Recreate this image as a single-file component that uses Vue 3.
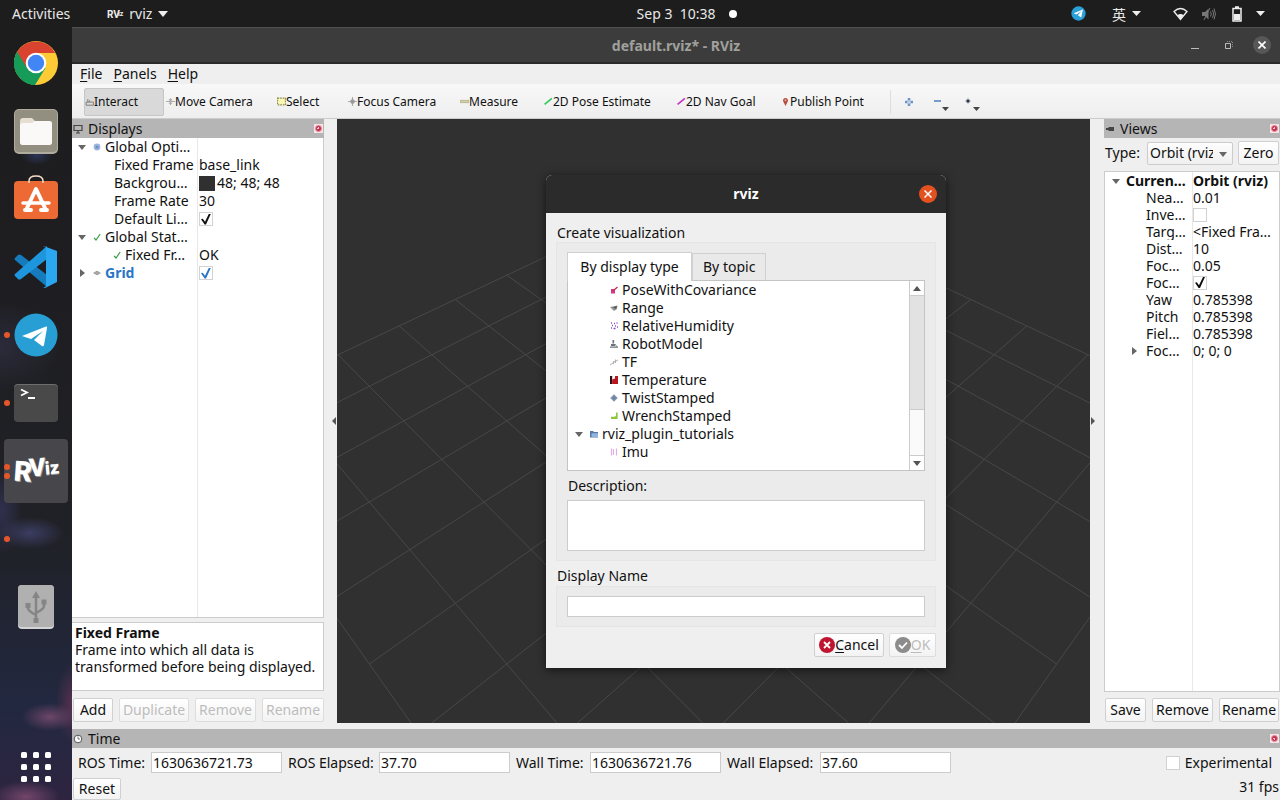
<script setup>
import { ref } from 'vue'

const icons = {
  interact: '<path d="M1 4.5h6.5v2.8H1zM2.5 4.5V1.8M4 4.5V3" fill="none" stroke="#777" stroke-width=".8"/>',
  move: '<path d="M0 4h8M4 1v6M2.5 2.5h3M2.5 5.5h3" fill="none" stroke="#aaa"/>',
  select: '<rect x=".5" y="1" width="7" height="6" fill="#fbf8b4" stroke="#8a8a50" stroke-dasharray="1.5 .8"/>',
  focus: '<path d="M0 4h8M4 0v8" stroke="#aaa"/><circle cx="4" cy="4" r="2" fill="#999"/>',
  measure: '<path d="M0 3h8v2H0z" fill="#d5d0a4" stroke="#a8a584" stroke-width=".6"/>',
  pose: '<path d="M.5 6.5 7 1.2" stroke="#33c85c" stroke-width="1.5"/>',
  nav: '<path d="M.5 6.5 7 1.2" stroke="#c338c0" stroke-width="1.5"/>',
  pin: '<path d="M4 8 2 4a2.2 2.2 0 1 1 4 0z" fill="#b5503f"/><circle cx="4" cy="2.8" r=".8" fill="#e9b8ae"/>',
  options: '<circle cx="4" cy="4" r="3.4" fill="#9db5dc"/><circle cx="4" cy="4" r="1.6" fill="#6f90c8"/>',
  tick: '<path d="M1 4.8 3 7 7.2 1" fill="none" stroke="#3c9a46" stroke-width="1.2"/>',
  grid: '<path d="M0 4 4 1.8 8 4 4 6.2z" fill="#999"/><path d="M2 3 6 5M6 3 2 5" stroke="#bbb" stroke-width=".5"/>',
  covariance: '<path d="M1 3h4v4.5H1z" fill="#d33a86"/><path d="M3 5 7.5 1" stroke="#c22f56" stroke-width="1.4"/>',
  range: '<path d="M0 3 7.5 1.5 7 5 4 7z" fill="#8f9492"/><path d="M3 3.2 7 2 6 5z" fill="#555"/>',
  humidity: '<path d="M1 1h1M4 1.5h1M6.5 1h1M2 3.5h1M5 4h1M7 5h1M1 6h1M3.5 6.5h2" stroke="#8450c9" stroke-width="1.3"/>',
  robot: '<path d="M2.5 0h1.6v3.5H2.5zM1 4h4v2H1zM0 6.5h8v1.3H0z" fill="#6c737b"/><path d="M5 4l2 3" stroke="#888"/>',
  tf: '<path d="M0 7l3-2M3.5 6V3M4 4l4-2M5.5 5V1.5" fill="none" stroke="#a7aaa3" stroke-width=".9"/>',
  temperature: '<path d="M0 0h2.2v8H0z" fill="#2b1014"/><path d="M2.2 3.5 5 2.500V0h3v8H2.2z" fill="#b91620"/>',
  twist: '<path d="M4 .2 7.8 4 4 7.8.2 4z" fill="#8799b2"/><path d="M4 1.5v5M2 4h4" stroke="#61769a" stroke-width=".8"/>',
  wrench: '<path d="M6 .5h1.6v6.500H1V4.8h3.4L6 4z" fill="#8cc63f"/>',
  folder: '<path d="M0 1h3l1 1h4v5.5H0z" fill="#54789f"/><path d="M1.5 3.2H8v4H1.5z" fill="#8eb5de"/>',
  imu: '<path d="M1.500 .5v7M3.500 1v6M6.5 .5v7" stroke="#ddb2e2" stroke-width="1.2"/>',
}

const launchers = [
  { id: 'chrome', name: 'Google Chrome', dots: 0 },
  { id: 'files', name: 'Files', dots: 0 },
  { id: 'store', name: 'Software', dots: 0 },
  { id: 'code', name: 'Visual Studio Code', dots: 0 },
  { id: 'telegram', name: 'Telegram', dots: 1 },
  { id: 'terminal', name: 'Terminal', dots: 1 },
  { id: 'rviz', name: 'RViz', dots: 2 },
  { id: 'blank', name: 'Application', dots: 1 },
  { id: 'usb', name: 'USB Drive', dots: 0 },
]

const tools = [
  { label: 'Interact', icon: 'interact', on: true },
  { label: 'Move Camera', icon: 'move' },
  { label: 'Select', icon: 'select' },
  { label: 'Focus Camera', icon: 'focus' },
  { label: 'Measure', icon: 'measure' },
  { label: '2D Pose Estimate', icon: 'pose' },
  { label: '2D Nav Goal', icon: 'nav' },
  { label: 'Publish Point', icon: 'pin' },
]

const displays = [
  { name: 'Global Opti…', level: 1, arrow: 'down', icon: 'options' },
  { name: 'Fixed Frame', level: 2, value: 'base_link' },
  { name: 'Backgrou…', level: 2, value: '48; 48; 48', swatch: true },
  { name: 'Frame Rate', level: 2, value: '30' },
  { name: 'Default Li…', level: 2, check: true },
  { name: 'Global Stat…', level: 1, arrow: 'down', icon: 'tick' },
  { name: 'Fixed Fr…', level: 2, icon: 'tick', value: 'OK' },
  { name: 'Grid', level: 1, arrow: 'right', icon: 'grid', check: true, blue: true },
]

const view = [
  { name: 'Curren…', level: 1, arrow: 'down', value: 'Orbit (rviz)', bold: true },
  { name: 'Nea…', level: 2, value: '0.01' },
  { name: 'Inve…', level: 2, check: false },
  { name: 'Targ…', level: 2, value: '<Fixed Fra…' },
  { name: 'Dist…', level: 2, value: '10' },
  { name: 'Foc…', level: 2, value: '0.05' },
  { name: 'Foc…', level: 2, check: true },
  { name: 'Yaw', level: 2, value: '0.785398' },
  { name: 'Pitch', level: 2, value: '0.785398' },
  { name: 'Fiel…', level: 2, value: '0.785398' },
  { name: 'Foc…', level: 2, arrow: 'right', value: '0; 0; 0' },
]

const types = [
  { name: 'PoseWithCovariance', icon: 'covariance' },
  { name: 'Range', icon: 'range' },
  { name: 'RelativeHumidity', icon: 'humidity' },
  { name: 'RobotModel', icon: 'robot' },
  { name: 'TF', icon: 'tf' },
  { name: 'Temperature', icon: 'temperature' },
  { name: 'TwistStamped', icon: 'twist' },
  { name: 'WrenchStamped', icon: 'wrench' },
  { name: 'rviz_plugin_tutorials', icon: 'folder', parent: true },
  { name: 'Imu', icon: 'imu' },
]

const clocks = ref([
  { id: 'ros-time', label: 'ROS Time:', value: '1630636721.73' },
  { id: 'ros-elapsed', label: 'ROS Elapsed:', value: '37.70' },
  { id: 'wall-time', label: 'Wall Time:', value: '1630636721.76' },
  { id: 'wall-elapsed', label: 'Wall Elapsed:', value: '37.60' },
])

// Orbit camera: distance 10, yaw and pitch 45 degrees, vertical field of view 45 degrees.
function project(a, b) {
  const right = (a - b) / Math.SQRT2
  const near = (a + b) / 2
  const scale = 729 / (10 - near)
  return [right * scale, near * scale]
}
const gridLines = []
for (let i = -5; i <= 5; i++) {
  gridLines.push([...project(i, -5), ...project(i, 5)])
  gridLines.push([...project(-5, i), ...project(5, i)])
}
</script>

<template>
  <div class="desktop">
    <header class="topbar">
      <div class="top-left">
        <button class="plain">Activities</button>
        <button class="plain app-menu">
          <svg class="mini-logo" width="16" height="14" viewBox="0 0 16 14"><text x="0" y="11">RV</text><text class="mini-iz" x="11" y="9">iz</text></svg>
          <span>rviz</span>
          <svg width="10" height="6" viewBox="0 0 10 6"><path d="M0 0h10L5 6z" fill="#eee" /></svg>
        </button>
      </div>
      <div class="clock"><span>Sep 3&nbsp; 10:38</span><i class="notice"></i></div>
      <div class="tray">
        <svg width="15" height="15" viewBox="0 0 44 44"><circle cx="22" cy="22" r="21" fill="#2a9fd8" /><path d="M8 21 35 10 30 34 20 27 31 15 16 25z" fill="#fff" /></svg>
        <span class="ime">英</span>
        <svg class="ime-arrow" width="9" height="6" viewBox="0 0 9 6"><path d="M0 0h9L4.500 5z" fill="#eee" /></svg>
        <svg class="wifi" width="15" height="14" viewBox="0 0 15 14"><path d="M1 4.500Q7.500-1.500 14 4.500L7.500 12.500z" fill="none" stroke="#eee" stroke-width="1.300" /><path d="M4.500 8q3-2 6 0l-3 4.500z" fill="#eee" /></svg>
        <svg class="volume" width="15" height="14" viewBox="0 0 15 14"><path d="M1 5h3l3.500-3.500v11L4 9H1z" fill="#777" /><path d="M9.500 4.500q1.500 2.500 0 5M11.500 3q2.500 4 0 8M13 1.500q3 5.500 0 11M3 13 9 1" fill="none" stroke="#777" /></svg>
        <svg class="battery" width="10" height="16" viewBox="0 0 10 16"><path d="M1 2.500h8v12.500H1zM3 1h4" fill="none" stroke="#eee" stroke-width="1.500" /><path d="M2 8h6v6H2z" fill="#eee" /></svg>
        <svg width="9" height="6" viewBox="0 0 9 6"><path d="M0 0h9L4.500 5z" fill="#eee" /></svg>
      </div>
    </header>

    <nav class="dock" aria-label="Launcher">
      <button v-for="l in launchers" :key="l.id" class="launcher" :class="{ current: l.id === 'rviz' }" :aria-label="l.name">
        <span v-if="l.dots" class="dots"><i v-for="n in l.dots" :key="n"></i></span>
        <svg v-if="l.id === 'chrome'" width="44" height="44" viewBox="0 0 44 44">
          <circle cx="22" cy="22" r="22" fill="#fdcb36" />
          <path d="M22 22 3 11A22 22 0 0 0 21 44L31.500 27z" fill="#169b58" />
          <path d="M3 11A22 22 0 0 1 41.100 12H22l-9 15z" fill="#d9432f" />
          <path d="M3 11 12.500 27 22 32l-1 12A22 22 0 0 1 3 11z" fill="#169b58" />
          <circle cx="22" cy="22" r="10.300" fill="#fff" /><circle cx="22" cy="22" r="8.200" fill="#4285f4" />
        </svg>
        <svg v-else-if="l.id === 'files'" width="44" height="45" viewBox="0 0 44 45">
          <rect width="44" height="45" rx="5" fill="#b0ac9e" /><rect x="1" y="1" width="42" height="42" rx="4" fill="#938f80" />
          <path d="M6 12q0-3 3-3h9l3 3h14q3 0 3 3v18q0 3-3 3H9q-3 0-3-3z" fill="#e6ddd3" /><path d="M6 17q0-3 3-3h9l3-2h14q3 0 3 3v18q0 3-3 3H9q-3 0-3-3z" fill="#fbf9f8" />
        </svg>
        <svg v-else-if="l.id === 'store'" class="store" width="44" height="44" viewBox="0 0 44 44">
          <rect y="6" width="44" height="38" rx="4" fill="#ee6a34" />
          <path d="M15 8V6q0-5 7-5t7 5v2" fill="none" stroke="#f3dfc9" stroke-width="1.500" />
          <path d="M13 33 22 14l9 19" fill="none" stroke="#fff" stroke-width="4" stroke-linecap="round" stroke-linejoin="round" />
          <path d="M9 28h26" stroke="#fff" stroke-width="3.500" stroke-linecap="round" />
          <path d="M11 35h6M27 35h6" stroke="#fff" stroke-width="4" stroke-linecap="round" />
        </svg>
        <svg v-else-if="l.id === 'code'" width="44" height="44" viewBox="0 0 44 44">
          <path d="M1 15q-1-1 0-2l3-3q1-1 3 0L33 30v12L1 15z" fill="#167bbd" />
          <path d="M1 29q-1 1 0 2l3 3q1 1 3 0L33 14V1L1 29z" fill="#1e96dd" />
          <path d="M31 1.500 43 6v31l-12 6q-1 0-2-1 3 1 3-2V4q0-4-3-2z" fill="#2ba7f2" />
        </svg>
        <svg v-else-if="l.id === 'telegram'" width="44" height="44" viewBox="0 0 44 44">
          <circle cx="22" cy="22" r="21.500" fill="#279fd5" /><path d="M8 23 32 13.500q1.500-.500 1 1.500L30 32q-.500 2-2 1l-8-6 9-9-12 8z" fill="#fff" />
        </svg>
        <svg v-else-if="l.id === 'terminal'" width="44" height="38" viewBox="0 0 44 38">
          <rect width="44" height="37" rx="4" fill="#6e6e6e" /><rect y="1" width="44" height="37" rx="4" fill="#494949" />
          <path d="m7 5.500 6 3-6 3M14 14h7" fill="none" stroke="#fff" stroke-width="1.800" />
        </svg>
        <svg v-else-if="l.id === 'rviz'" class="logo" width="56" height="40" viewBox="0 0 56 40">
          <g class="logo-shadow"><text x="7" y="31" class="big" transform="rotate(4 14 20)">R</text><text x="22" y="26" class="mid" transform="rotate(-4 30 18)">V</text><text x="37" y="24" class="low" transform="rotate(-5 42 18)">iz</text></g>
          <g><text x="6" y="30" class="big" transform="rotate(4 14 20)">R</text><text x="21" y="25" class="mid" transform="rotate(-4 30 18)">V</text><text x="37" y="23" class="low" transform="rotate(-5 42 18)">iz</text></g>
        </svg>
        <svg v-else-if="l.id === 'usb'" width="36" height="44" viewBox="0 0 36 44">
          <rect width="36" height="44" rx="4" fill="#d4d4d4" /><rect width="36" height="42" rx="4" fill="#b0b0b0" />
          <path d="M18 10v27M10 19v4q0 3 8 7M26 17v4q0 3-8 7" fill="none" stroke="#858585" stroke-width="2.500" />
          <path d="m18 6 4 7h-8zM7.500 18h5v5h-5zM23.500 14.500h5v5h-5zM15.500 33h5v5h-5z" fill="#858585" />
        </svg>
      </button>
      <button class="launcher apps" aria-label="Show Applications">
        <svg width="32" height="32" viewBox="0 0 32 32" fill="#fff">
          <template v-for="y in 3" :key="y"><rect v-for="x in 3" :key="x" :x="(x - 1) * 12 + 1" :y="(y - 1) * 12 + 1" width="6" height="6" rx="1.500" /></template>
        </svg>
      </button>
    </nav>

    <main class="window">
      <div class="titlebar">
        <h1>default.rviz* - RViz</h1>
        <div class="win-buttons">
          <button class="plain" aria-label="Minimize"><svg width="10" height="10" viewBox="0 0 10 10"><path d="M1 8.500h8" stroke="#bbb" /></svg></button>
          <button class="plain" aria-label="Restore"><svg width="10" height="10" viewBox="0 0 10 10"><path d="M1.500 3.500h5v5h-5z" fill="none" stroke="#bbb" /><path d="M3 1.500h5.500V7" fill="none" stroke="#888" stroke-dasharray="1 1" /></svg></button>
          <button class="plain round" aria-label="Close"><svg width="8" height="8" viewBox="0 0 8 8"><path d="m.5.5 7 7M7.500.5l-7 7" stroke="#fff" stroke-width="1.600" /></svg></button>
        </div>
      </div>
      <div class="menubar">
        <button class="plain"><u>F</u>ile</button><button class="plain"><u>P</u>anels</button><button class="plain"><u>H</u>elp</button>
      </div>
      <div class="toolbar">
        <button v-for="t in tools" :key="t.label" class="plain tool" :class="{ on: t.on }">
          <svg width="9" height="9" viewBox="0 0 8 8" v-html="icons[t.icon]"></svg>{{ t.label }}
        </button>
        <div class="extras">
          <button class="plain" aria-label="Add tool"><svg width="8" height="8" viewBox="0 0 8 8"><path d="M4 0v8M0 4h8" stroke="#6e93c7" stroke-width="2.500" /><path d="M4 2v4M2 4h4" stroke="#dbe7f7" /></svg></button>
          <button class="plain" aria-label="Remove tool"><svg width="18" height="16" viewBox="0 0 18 16"><path d="M1 5h7" stroke="#5b85c3" stroke-width="1.600" /><path d="M9 11h7l-3.500 4z" fill="#444" /></svg></button>
          <button class="plain" aria-label="Rename tool"><svg width="18" height="16" viewBox="0 0 18 16"><path d="m4 2 3 3-3 3-3-3z" fill="#a9b7cd" /><circle cx="4" cy="5" r="1.500" fill="#333" /><path d="M9 11h7l-3.500 4z" fill="#444" /></svg></button>
        </div>
      </div>

      <div class="body">
        <section class="panel left">
          <div class="head">
            <svg width="10" height="10" viewBox="0 0 10 10"><path d="M1 1.500h8v5H1zM5 6.500V9M3 9h4" fill="none" stroke="#444" stroke-width="1.200" /></svg>
            <h2>Displays</h2><button class="plain close" aria-label="Close Displays"></button>
          </div>
          <div class="tree">
            <table>
              <tbody>
                <tr v-for="(r, i) in displays" :key="i" :class="['level' + r.level, { blue: r.blue }]">
                  <th scope="row">
                    <span class="cell">
                      <span class="twist"><svg v-if="r.arrow" width="8" height="8" viewBox="0 0 8 8"><path :d="r.arrow === 'down' ? 'M0 2h8L4 7z' : 'M2 0v8l5-4z'" fill="#666" /></svg></span>
                      <svg v-if="r.icon" class="ico" width="8" height="8" viewBox="0 0 8 8" v-html="icons[r.icon]"></svg>{{ r.name }}
                    </span>
                  </th>
                  <td><span class="cell"><i v-if="r.swatch" class="swatch"></i><input v-if="r.check !== undefined" type="checkbox" :checked="r.check" :aria-label="r.name">{{ r.value }}</span></td>
                </tr>
              </tbody>
            </table>
          </div>
          <div class="help"><b>Fixed Frame</b><br>Frame into which all data is transformed before being displayed.</div>
          <div class="actions">
            <button class="btn">Add</button><button class="btn" disabled>Duplicate</button><button class="btn" disabled>Remove</button><button class="btn" disabled>Rename</button>
          </div>
        </section>

        <button class="plain splitter" aria-label="Collapse left panel"><svg width="5" height="8" viewBox="0 0 5 8"><path d="M5 0v8L1 4z" fill="#555" /></svg></button>
        <div class="scene">
          <svg viewBox="-376 -302 753 604" preserveAspectRatio="xMidYMid slice" aria-label="Grid">
            <line v-for="(g, i) in gridLines" :key="i" :x1="g[0]" :y1="g[1]" :x2="g[2]" :y2="g[3]" />
          </svg>
        </div>
        <button class="plain splitter right-split" aria-label="Collapse right panel"><svg width="5" height="8" viewBox="0 0 5 8"><path d="M0 0v8l4-4z" fill="#555" /></svg></button>

        <section class="panel right">
          <div class="head">
            <svg width="10" height="10" viewBox="0 0 10 10"><path d="M1 4h2l1-1h5v4H4L3 6H1z" fill="#444" /></svg>
            <h2>Views</h2><button class="plain close" aria-label="Close Views"></button>
          </div>
          <div class="type-row">
            <label for="view-type">Type:</label>
            <span class="select"><select id="view-type"><option>Orbit (rviz)</option></select><svg width="8" height="5" viewBox="0 0 8 5"><path d="M0 0h8L4 5z" fill="#666" /></svg></span>
            <button class="btn">Zero</button>
          </div>
          <div class="tree">
            <table>
              <tbody>
                <tr v-for="(r, i) in view" :key="i" :class="['level' + r.level, { bold: r.bold }]">
                  <th scope="row">
                    <span class="cell">
                      <span class="twist"><svg v-if="r.arrow" width="8" height="8" viewBox="0 0 8 8"><path :d="r.arrow === 'down' ? 'M0 2h8L4 7z' : 'M2 0v8l5-4z'" fill="#666" /></svg></span>{{ r.name }}
                    </span>
                  </th>
                  <td><span class="cell"><input v-if="r.check !== undefined" type="checkbox" :checked="r.check" :aria-label="r.name">{{ r.value }}</span></td>
                </tr>
              </tbody>
            </table>
          </div>
          <div class="actions">
            <button class="btn">Save</button><button class="btn">Remove</button><button class="btn">Rename</button>
          </div>
        </section>
      </div>

      <section class="time">
        <div class="head">
          <svg width="10" height="10" viewBox="0 0 10 10"><circle cx="5" cy="5" r="3.800" fill="#fff" stroke="#555" /><path d="M5 2.500V5h2" fill="none" stroke="#555" stroke-width=".8" /></svg>
          <h2>Time</h2><button class="plain close" aria-label="Close Time"></button>
        </div>
        <div class="time-row">
          <div class="clocks">
            <template v-for="c in clocks" :key="c.id"><label :for="c.id">{{ c.label }}</label><input :id="c.id" v-model="c.value" type="text"></template>
          </div>
          <label class="experimental"><input type="checkbox">Experimental</label>
        </div>
        <div class="status"><button class="btn">Reset</button><span>31 fps</span></div>
      </section>
    </main>

    <div class="dialog" role="dialog" aria-labelledby="dialog-title">
      <div class="dialog-title"><h2 id="dialog-title">rviz</h2>
        <button class="plain" aria-label="Close"><svg width="8" height="8" viewBox="0 0 8 8"><path d="m.5.5 7 7M7.500.5l-7 7" stroke="#fff" stroke-width="1.500" /></svg></button>
      </div>
      <div class="dialog-body">
        <h3>Create visualization</h3>
        <div class="group">
          <div class="tabs" role="tablist">
            <button class="tab active" role="tab" aria-selected="true">By display type</button><button class="tab" role="tab" aria-selected="false">By topic</button>
          </div>
          <div class="listbox">
            <ul>
              <li v-for="t in types" :key="t.name" :class="{ parent: t.parent }">
                <svg v-if="t.parent" class="fold" width="8" height="8" viewBox="0 0 8 8"><path d="M0 2h8L4 7z" fill="#666" /></svg>
                <svg width="8" height="8" viewBox="0 0 8 8" v-html="icons[t.icon]"></svg>{{ t.name }}
              </li>
            </ul>
            <div class="scroll">
              <button class="plain" aria-label="Scroll up"><svg width="8" height="5" viewBox="0 0 8 5"><path d="M0 5h8L4 0z" fill="#555" /></svg></button>
              <div class="track"></div>
              <button class="plain" aria-label="Scroll down"><svg width="8" height="5" viewBox="0 0 8 5"><path d="M0 0h8L4 5z" fill="#555" /></svg></button>
            </div>
          </div>
          <label for="description">Description:</label>
          <textarea id="description" readonly></textarea>
        </div>
        <label class="name-label" for="display-name">Display Name</label>
        <div class="group name-group"><input id="display-name" type="text"></div>
        <div class="dialog-actions">
          <button class="btn"><svg width="16" height="16" viewBox="0 0 16 16"><circle cx="8" cy="8" r="8" fill="#c01530" /><path d="m5 5 6 6M11 5l-6 6" stroke="#fff" stroke-width="1.800" /></svg><span><u>C</u>ancel</span></button>
          <button class="btn" disabled><svg width="16" height="16" viewBox="0 0 16 16"><circle cx="8" cy="8" r="8" fill="#8c8c8c" /><path d="m4 8 3 3 5-5.500" fill="none" stroke="#fff" stroke-width="1.800" /></svg><span><u>O</u>K</span></button>
        </div>
      </div>
    </div>
  </div>
</template>

<style>
html, body, #app { height: 100%; margin: 0; }
</style>

<style scoped>
* { box-sizing: border-box; }
.desktop {
  position: relative; display: grid; grid-template: 27px minmax(0, 1fr) / 72px minmax(0, 1fr);
  height: 100%; min-height: 720px; overflow: hidden; background: #1d1d1d; color: #111;
  font: 14px/18px "Noto Sans", "Noto Sans CJK SC", sans-serif;
}
button, input, select, textarea { font: inherit; color: inherit; margin: 0; }
.plain { border: 0; padding: 0; background: none; }
h1, h2, h3 { margin: 0; font: inherit; }
svg { display: block; flex: none; }

.topbar { grid-column: 1 / -1; display: grid; grid-template-columns: 1fr auto 1fr; align-items: center; padding-left: 72px; color: #e8e8e8; }
.top-left { display: flex; gap: 37px; margin-left: -60px; }
.app-menu { display: flex; align-items: center; gap: 6px; }
.mini-logo { overflow: visible; fill: #eee; font: bold 10px/12px Roboto, sans-serif; }
.mini-iz { font-size: 7px; }
.clock { position: relative; }
.notice { position: absolute; left: 100%; top: 5px; margin-left: 14px; width: 8px; height: 8px; border-radius: 50%; background: #fff; }
.tray { display: flex; align-items: center; justify-content: flex-end; padding-right: 15px; }
.ime { margin-left: 26px; font-family: "Noto Sans CJK SC", sans-serif; }
.ime-arrow { margin-left: 6px; }
.wifi { margin-left: 32px; }
.volume { margin-left: 13px; }
.battery { margin: 0 14px 0 16px; }

.dock {
  display: flex; flex-direction: column; gap: 4px; padding: 4px 4px 1px;
  background:
    radial-gradient(ellipse 34px 16px at 30px 506px, #3b3d63 0, transparent 100%),
    radial-gradient(ellipse 20px 44px at 2px 484px, #30304f 0, transparent 100%),
    radial-gradient(ellipse 28px 14px at 50px 690px, #6d4669 0, transparent 100%),
    radial-gradient(ellipse 16px 40px at 72px 676px, #55304f 0, transparent 100%),
    radial-gradient(ellipse 34px 16px at 26px 770px, #73466b 0, transparent 100%),
    radial-gradient(ellipse 60px 44px at 0 320px, #2b2b3b 0, transparent 100%),
    radial-gradient(ellipse 16px 10px at 37px 128px, #2c3558 0, transparent 100%),
    linear-gradient(#1d1d1d 0, #1e1e22 35%, #202126 65%, #222840 88%, #2e2440 100%);
}
.launcher { position: relative; display: flex; align-items: center; justify-content: center; flex: 0 0 64px; border: 0; padding: 0; border-radius: 4px; background: none; }
.current { background: #47474b; }
.apps { margin-top: auto; }
.store { margin-top: -5px; }
.dots { position: absolute; left: 0; top: 0; bottom: 0; display: flex; flex-direction: column; justify-content: center; gap: 3px; }
.dots i { width: 6px; height: 6px; border-radius: 50%; background: #e5562b; }
.logo { overflow: visible; fill: #fff; font: 900 28px/32px Roboto, sans-serif; }
.logo-shadow { fill: #9a9a9a; }
.big { font-size: 28px; }
.mid { font-size: 25px; }
.low { font-size: 18px; }

.window { display: flex; flex-direction: column; min-width: 0; background: #efefef; }
.titlebar { position: relative; display: flex; align-items: center; justify-content: center; height: 37px; flex: none; padding-top: 2px; background: #3c3c3c; border-top: 1px solid #505050; border-bottom: 2px solid #292929; color: #a0a09c; font-weight: 700; }
.win-buttons { position: absolute; right: 9px; top: 8px; display: flex; align-items: center; gap: 15px; }
.win-buttons button { display: grid; place-items: center; width: 19px; height: 18px; }
.win-buttons .round { width: 18px; border-radius: 50%; background: #575757; }
.menubar { display: flex; gap: 11px; padding: 0 8px; height: 20px; flex: none; }
.menubar button { height: 19px; }
u { text-underline-offset: 2px; }
.toolbar { display: grid; grid-template-columns: 82px 111px 71px 112px 84px 133px 104px 110px 1fr; align-items: center; height: 35px; flex: none; padding: 1px 0 0 12px; background: linear-gradient(#f8f8f8, #eee); border-bottom: 1px solid #ccc; font-size: 12px; }
.tool { display: flex; align-items: center; justify-self: start; height: 28px; white-space: nowrap; }
.tool.on { width: 80px; background: #d9d9d9; border: 1px solid #c6c6c6; border-radius: 2px; }
.extras { display: flex; align-items: center; gap: 13px; height: 24px; margin-left: -1px; padding-left: 14px; border-left: 1px solid #ddd; }
.extras button:first-child { margin-right: 7px; }
.extras button:nth-child(n+2) svg { margin-top: 5px; }

.body { display: grid; grid-template-columns: 252px 13px minmax(0, 1fr) 14px 176px; flex: 1; min-height: 0; padding-bottom: 6px; }
.panel { display: flex; flex-direction: column; min-width: 0; min-height: 0; }
.head { display: flex; align-items: center; gap: 5px; height: 19px; flex: none; padding: 0 1px; background: #b5b5b5; }
.head h2 { flex: 1; }
.close { width: 9px; height: 9px; border: 1px solid #f6e3e6; background: radial-gradient(circle, #f2d0d6 0 1px, #c9314f 1px 2px, #f6e6e9 4px); }
.tree { flex: 1; min-height: 0; overflow: hidden; background: #fff; border: 1px solid #ccc; border-left: 0; }
table { width: 100%; height: 100%; table-layout: fixed; border-collapse: collapse; }
tbody { display: block; height: 100%; }
tr { display: flex; }
th, td { padding: 0; text-align: left; font-weight: 400; white-space: nowrap; overflow: hidden; }
th { flex: none; }
td { flex: 1; }
.cell { display: flex; align-items: center; height: 18px; }
.twist { display: flex; justify-content: center; width: 20px; flex: none; }
.ico { margin-right: 4px; }
.left .tree { border-top: 0; background: linear-gradient(90deg, #fff 125px, #e8e8e8 125px 126px, #fff 126px); }
.left th { width: 127px; }
.left .level1 .ico { margin-left: 1px; }
.left .level2 .twist { width: 42px; }
.left .twist:has(+ .ico) { width: 20px; }
.left .level2 .twist:has(+ .ico) { width: 41px; }
.blue { color: #2a76c6; font-weight: 700; }
.blue th { font-weight: 700; }
.swatch { width: 16px; height: 15px; margin-right: 2px; background: #303030; }
input[type="checkbox"] { appearance: none; display: grid; place-items: center; flex: none; width: 14px; height: 14px; border: 1px solid #d2d2d2; background: #fff; }
input[type="checkbox"]:checked::before { content: ""; width: 10px; height: 11px; background: currentColor; clip-path: polygon(0 52%, 18% 48%, 40% 74%, 80% 0, 100% 0, 50% 100%, 36% 100%); }
.help { height: 69px; flex: none; margin: 4px 0 7px; padding: 1px 3px; border: 1px solid #ccc; border-left: 0; background: #fff; line-height: 17px; }
.actions { display: flex; flex: none; gap: 6px; height: 24px; margin-bottom: 1px; }
.left .actions { display: grid; grid-template-columns: 40px 70px 61px 62px; padding-left: 1px; }
.btn { display: flex; align-items: center; justify-content: center; height: 24px; padding: 0; border: 1px solid #d0d0d0; border-radius: 2px; background: linear-gradient(#fff, #f3f3f3); white-space: nowrap; }
.btn:disabled { color: #bdbdbd; border-color: #ddd; }
.splitter { display: flex; align-items: center; justify-content: flex-end; padding-right: 1px; }
.right-split { justify-content: flex-start; padding-left: 1px; }
.scene { position: relative; overflow: hidden; background: #303030; }
.scene svg { position: absolute; inset: 0; width: 100%; height: 100%; }
.scene line { stroke: #484848; stroke-width: 1; }
.type-row { display: grid; grid-template-columns: 37px 1fr 41px; gap: 5px; align-items: center; flex: none; padding: 3px 1px 6px; }
.select { position: relative; display: block; }
.select svg { position: absolute; right: 6px; top: 10px; }
select { display: block; appearance: none; width: 100%; height: 23px; padding: 0 19px 0 2px; border: 1px solid #ccc; border-radius: 2px; background: linear-gradient(#fdfdfd, #efefef); }
.right .tree { border-left: 1px solid #ccc; background: linear-gradient(90deg, #fff 87px, #e8e8e8 87px 88px, #fff 88px); }
.right .cell { height: 17px; }
.right th { width: 88px; }
.right .twist { width: 21px; }
.right .level2 .twist { justify-content: flex-end; width: 33px; margin-right: 8px; }
.bold, .bold th, .bold td { font-weight: 700; }
.right .actions { display: grid; grid-template-columns: 41px 61px 1fr; padding: 0 1px; margin-top: 6px; }

.time { flex: none; height: 71px; }
.time-row { display: flex; align-items: center; justify-content: space-between; height: 29px; padding: 0 8px 0 6px; }
.clocks { display: grid; grid-template-columns: 67px 131px 85px 131px 68px 131px 87px 131px; gap: 6px; align-items: center; white-space: nowrap; }
input[type="text"] { width: 100%; height: 21px; padding: 0 1px; border: 1px solid #ccc; background: #fff; }
.experimental { display: flex; align-items: center; gap: 5px; }
.status { display: flex; justify-content: space-between; padding: 1px 1px 0; }
.status .btn { width: 48px; height: 22px; }

.dialog { position: absolute; left: calc(50% - 94px); top: 175px; width: 400px; background: #efefef; border-radius: 6px 6px 0 0; box-shadow: 0 2px 10px #0009; }
.dialog-title { position: relative; display: grid; place-items: center; height: 38px; border-radius: 6px 6px 0 0; background: #2b2b2b; color: #fff; font-weight: 700; }
.dialog-title button { position: absolute; right: 9px; top: 10px; display: grid; place-items: center; width: 18px; height: 18px; border-radius: 50%; background: #e2511f; }
.dialog-body { display: flex; flex-direction: column; padding: 11px 10px; }
.dialog-body h3 { padding-left: 1px; }
.group { display: flex; flex-direction: column; padding: 9px 10px; border: 1px solid #e5e5e5; background: #ebebeb; }
.tabs { display: flex; align-items: flex-end; height: 28px; }
.tab { height: 27px; padding: 0 10px; border: 1px solid #d0d0d0; border-bottom: 0; background: #e9e9e9; }
.tab.active { position: relative; flex: 0 0 125px; height: 29px; margin-bottom: -1px; background: #fff; }
.listbox { display: flex; height: 191px; border: 1px solid #c4c4c4; background: #fff; }
ul { flex: 1; margin: 0; padding: 0; list-style: none; }
li { display: flex; align-items: center; height: 18px; padding-left: 42px; gap: 4px; }
li.parent { padding-left: 7px; }
.fold { margin-right: 3px; }
.scroll { display: flex; flex-direction: column; width: 15px; border-left: 1px solid #ccc; }
.scroll button { display: grid; place-items: center; height: 14px; }
.track { flex: 1; border: 1px solid #ccc; border-width: 1px 0; background: linear-gradient(#e2e2e2 71%, #ccc 71% 72%, #fafafa 72%); }
.group label { padding: 6px 1px 5px; }
textarea { height: 51px; border: 1px solid #ccc; background: #fff; resize: none; }
.name-label { padding: 6px 1px 1px; }
.dialog-actions { display: flex; justify-content: flex-end; gap: 5px; margin-top: 6px; }
.dialog-actions .btn { width: 70px; }
.dialog-actions .btn:disabled { width: 47px; }
</style>
